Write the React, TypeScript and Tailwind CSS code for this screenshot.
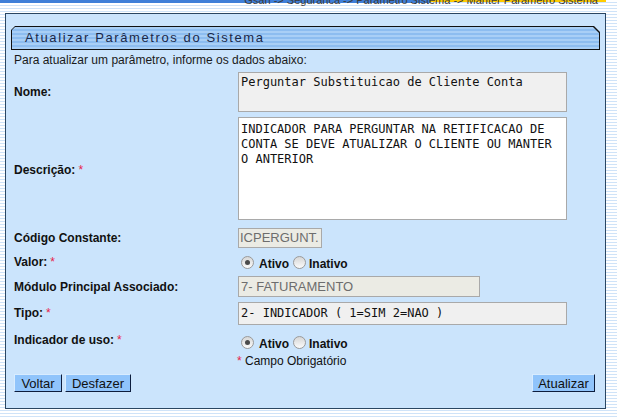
import React from "react";

const Radio = ({ checked }: { checked?: boolean }) => (
  <span className="inline-flex w-[13px] h-[13px] rounded-full border border-[#9a9a9a] bg-[linear-gradient(#d6d6d6,#fbfbfb)] items-center justify-center">
    {checked && <span className="w-[5px] h-[5px] rounded-full bg-[#4a4a4a]" />}
  </span>
);

const Req = () => <span className="text-[#e8234a] font-normal ml-[3px]">*</span>;

const RadioGroup = ({ extra = "" }: { extra?: string }) => (
  <div className={`flex items-center text-[12px] font-bold text-[#111] ${extra}`}>
    <span className="ml-[3px] flex items-center">
      <Radio checked />
      <span className="ml-[5px] mt-[3px]">Ativo</span>
    </span>
    <span className="ml-[4px] flex items-center">
      <Radio />
      <span className="ml-[3px] mt-[3px]">Inativo</span>
    </span>
  </div>
);

const Label = ({ children }: { children: React.ReactNode }) => (
  <div className="w-[224px] shrink-0 text-[12px] font-bold text-[#111]">{children}</div>
);

const Btn = ({ children, w }: { children: React.ReactNode; w: string }) => (
  <button
    className={`${w} h-[18px] bg-[#90c4fb] text-[13px] leading-[15px] text-[#111] border border-t-[#d8ecff] border-l-[#d8ecff] border-b-[#0d1d3d] border-r-[#0d1d3d] flex items-center justify-center`}
  >
    {children}
  </button>
);

export default function App() {
  return (
    <div className="w-[617px] h-[417px] overflow-hidden font-[Liberation_Sans,Arial,sans-serif] bg-[repeating-linear-gradient(to_bottom,#ffffff_0px,#ffffff_2px,#cfe3f8_2px,#cfe3f8_3px)]">
      {/* top strip */}
      <div className="relative h-[13px]">
        <div className="flex">
          <div className="w-[430px] h-[3px] bg-[#3f7fd8]" />
          <div className="w-[176px] h-[2px] bg-[#ffcc00]" />
        </div>
        <div className="absolute right-[19px] top-[-6px] text-[11px] leading-[13px] text-[#3a3a3a] whitespace-nowrap">
          Gsan -&gt; Seguranca -&gt; Parametro Sistema -&gt; Manter Parametro Sistema
        </div>
      </div>

      {/* panel */}
      <div className="ml-[5px] w-[601px] h-[396px] border border-[#2a4662] bg-[#cbe4fc] px-[5px] pt-[12px]">
        {/* tab header */}
        <div className="h-[24px] bg-[#111] p-[1px] [clip-path:polygon(4px_0,calc(100%-6px)_0,100%_6px,100%_100%,0_100%,0_4px)]">
          <div className="h-full flex items-center pl-[13px] [clip-path:polygon(3px_0,calc(100%-6px)_0,100%_6px,100%_100%,0_100%,0_3px)] bg-[repeating-linear-gradient(to_bottom,#a9cff6_0px,#a9cff6_2px,#8dbdf0_2px,#8dbdf0_4px)]">
            <span className="text-[13px] tracking-[1.6px] text-[#1a2848]">Atualizar Parâmetros do Sistema</span>
          </div>
        </div>

        <div className="px-[3px] pr-[5px]">
          <div className="mt-[3px] h-[14px] text-[12px] leading-[14px] text-[#1a1a1a]">
            Para atualizar um parâmetro, informe os dados abaixo:
          </div>

          <div className="mt-[3px] h-[44px] flex items-center">
            <Label>Nome:</Label>
            <div className="w-[329px] h-[40px] bg-[#f0f0f0] border border-[#a9a9a9] px-[2px] pt-[2px] font-[DejaVu_Sans_Mono,monospace] text-[12px] leading-[15px] text-[#111]">
              Perguntar Substituicao de Cliente Conta
            </div>
          </div>

          <div className="h-[112px] flex items-center">
            <Label>
              Descrição:<Req />
            </Label>
            <div className="mt-[3px] mb-[6px] w-[329px] h-[103px] bg-white border border-[#a9a9a9] px-[2px] pt-[4px] font-[DejaVu_Sans_Mono,monospace] text-[12px] leading-[15px] text-[#111]">
              INDICADOR PARA PERGUNTAR NA RETIFICACAO DE CONTA SE DEVE ATUALIZAR O CLIENTE OU MANTER O ANTERIOR
            </div>
          </div>

          <div className="h-[24px] flex items-center">
            <Label>Código Constante:</Label>
            <div className="w-[84px] h-[20px] bg-[#ebebe4] border border-[#a9a9a9] px-[1px] text-[13px] leading-[18px] text-[#6d6d6d] whitespace-nowrap overflow-hidden">
              ICPERGUNT.
            </div>
          </div>

          <div className="h-[24px] flex items-center">
            <Label>
              Valor:<Req />
            </Label>
            <RadioGroup />
          </div>

          <div className="h-[25px] flex items-center">
            <Label>Módulo Principal Associado:</Label>
            <div className="w-[242px] h-[21px] bg-[#ebebe4] border border-[#a9a9a9] px-[2px] text-[13px] leading-[19px] text-[#6d6d6d]">
              7- FATURAMENTO
            </div>
          </div>

          <div className="h-[28px] flex items-center">
            <Label>
              Tipo:<Req />
            </Label>
            <div className="w-[329px] h-[23px] bg-[#f0f0f0] border border-[#a9a9a9] px-[2px] font-[DejaVu_Sans_Mono,monospace] text-[12px] leading-[21px] text-[#111] whitespace-pre">
              2- INDICADOR ( 1=SIM 2=NAO )
            </div>
          </div>

          <div className="h-[26px] flex items-center">
            <Label>
              Indicador de uso:<Req />
            </Label>
            <RadioGroup extra="mt-[4px]" />
          </div>

          <div className="h-[16px] flex items-center">
            <div className="w-[223px] shrink-0" />
            <div className="text-[12px] text-[#111]">
              <span className="text-[#e8234a]">*</span> Campo Obrigatório
            </div>
          </div>

          <div className="mt-[5px] flex items-center">
            <Btn w="w-[48px]">Voltar</Btn>
            <div className="ml-[3px]">
              <Btn w="w-[66px]">Desfazer</Btn>
            </div>
            <div className="ml-auto">
              <Btn w="w-[63px]">Atualizar</Btn>
            </div>
          </div>
        </div>
      </div>
    </div>
  );
}
